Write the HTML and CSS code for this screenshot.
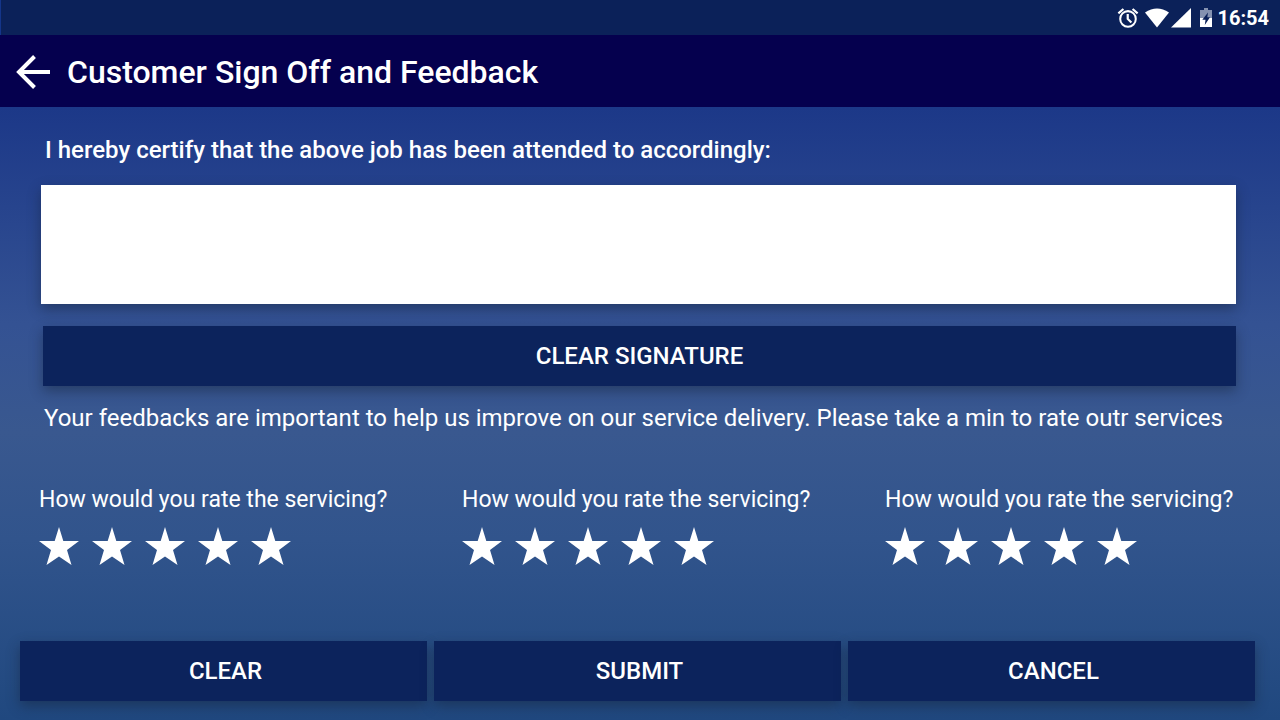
FILE: index.html
```html
<!DOCTYPE html>
<html lang="en">
<head>
<meta charset="utf-8">
<title>Customer Sign Off and Feedback</title>
<link rel="stylesheet" href="styles.css">
</head>
<body>
<div class="status">
<svg class="alarm" viewBox="0 0 24 24" width="22" height="22"><circle cx="12" cy="13" r="8.500" fill="none" stroke="#fff" stroke-width="2.200"/><path fill="none" stroke="#fff" stroke-width="2.400" d="M1.500 7L7 2.200M22.500 7L17 2.200M11.700 7.500V13l4 4"/></svg>
<svg width="24" height="20" viewBox="0 0 24 20"><path fill="#fff" d="M0 4.500Q12-3.500 24 4.500L12 19.500z"/></svg>
<svg class="signal" width="20" height="20" viewBox="0 0 20 20"><path fill="#fff" d="M0 19.500L20 0V19.500z"/></svg>
<svg class="battery" width="12" height="20" viewBox="0 0 12 20"><path fill="#8592b0" d="M4 0h4v2h4v8H0V2h4z"/><path fill="#fff" d="M0 10h12v9H0z"/><path fill="#0b2159" d="M8 4.500L7.300 9.300H10L4.800 17l.7-5.300H2.300z"/></svg>
<span class="clock">16:54</span>
</div>
<header class="bar">
<button class="back" aria-label="Back"><svg width="34" height="34" viewBox="0 0 34 34"><path fill="none" stroke="#fff" stroke-width="4" d="M34 17H3M18.500 1.500L3 17l15.500 15.500"/></svg></button>
<h1>Customer Sign Off and Feedback</h1>
</header>
<main>
<p class="certify">I hereby certify that the above job has been attended to accordingly:</p>
<div class="signature" role="img" aria-label="Signature"></div>
<button class="btn clear-signature">CLEAR SIGNATURE</button>
<p class="notice">Your feedbacks are important to help us improve on our service delivery. Please take a min to rate outr services</p>
<section class="ratings" id="ratings"></section>
<div class="actions"><button class="btn">CLEAR</button><button class="btn">SUBMIT</button><button class="btn">CANCEL</button></div>
</main>
<script src="ratings.js"></script>
</body>
</html>
```
FILE: ratings.js
```js
const star = '<svg width="40" height="38" viewBox="0 0 40 38"><path fill="#fff" d="M20 0l4.300 14H40L28 23 32.500 38 20 29.500 7.500 38 12 23 0 14h15.700z"/></svg>';
const ratings = document.getElementById('ratings');
for (let i = 0; i < 3; i++) {
  const group = document.createElement('div');
  group.className = 'rating';
  let stars = '';
  for (let n = 1; n <= 5; n++) stars += `<button class="star" aria-label="${n} of 5">${star}</button>`;
  group.innerHTML = `<p>How would you rate the servicing?</p><div class="stars">${stars}</div>`;
  ratings.append(group);
}
```
FILE: styles.css
```css
* { box-sizing: border-box; }
html { height: 100%; }
body { margin: 0; min-height: 100%; display: flex; flex-direction: column; font-family: Roboto, sans-serif; color: #fff; background: linear-gradient(#1c3888 15%, #345293 45%, #39588f 60%, #31548c 75%, #20487f 100%); }
p, h1 { margin: 0; white-space: nowrap; }
button { border: 0; padding: 0; margin: 0; color: inherit; background: none; font-family: inherit; cursor: pointer; }
svg { display: block; }
.status { height: 35px; background: #0b2159; border-left: 1px solid #14358a; display: flex; justify-content: flex-end; align-items: center; padding-right: 11px; }
.alarm { margin-right: 6px; }
.signal { margin-left: 2px; }
.battery { margin: 0 5px 0 9px; }
.clock { font-size: 20px; line-height: 24px; font-weight: 700; padding-top: 1px; }
.bar { height: 72px; background: #05004e; display: flex; align-items: center; padding: 1px 0 0 16px; gap: 17px; }
h1 { font-size: 32px; font-weight: 500; }
main { flex: 1; display: flex; flex-direction: column; padding: 28px 25px 19px 20px; }
.certify { font-size: 24px; font-weight: 500; line-height: 30px; margin-left: 25px; }
.signature { height: 119px; margin: 20px 19px 22px 21px; background: #fff; box-shadow: 0 5px 12px rgba(20,30,50,.45); }
.btn { height: 60px; background: #0c235c; font-size: 24px; font-weight: 500; box-shadow: 0 5px 12px rgba(20,30,50,.45); }
.clear-signature { margin: 0 19px 0 23px; }
.notice { margin: 16px 0 0 24px; font-size: 24px; line-height: 32px; }
.ratings { display: flex; justify-content: space-between; margin: 51px 20px 0 19px; font-size: 23px; line-height: 30px; }
.rating { min-width: 350px; }
.stars { display: flex; gap: 13px; margin-top: 12px; }
.actions { margin-top: auto; display: grid; grid-template-columns: repeat(3, 1fr); gap: 7px; }
.actions .btn { padding-left: 4px; }
```
